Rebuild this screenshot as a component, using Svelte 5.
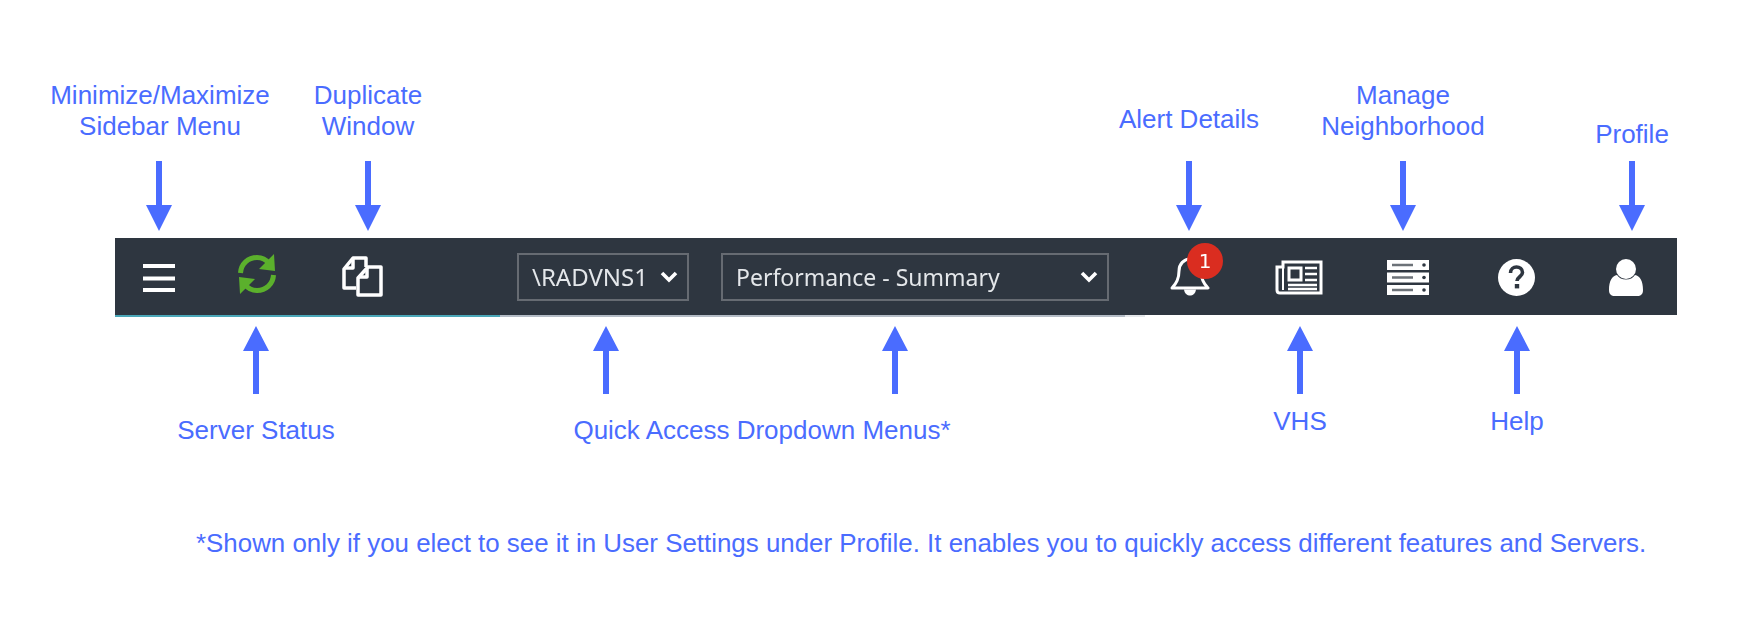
<script>
    // callouts around the toolbar: x is the centre, y the middle of the first line
    const labels = [
        { x: 160, y: 95, lines: ["Minimize/Maximize", "Sidebar Menu"] },
        { x: 368, y: 95, lines: ["Duplicate", "Window"] },
        { x: 1189, y: 119, lines: ["Alert Details"] },
        { x: 1403, y: 95, lines: ["Manage", "Neighborhood"] },
        { x: 1632, y: 134, lines: ["Profile"] },
        { x: 256, y: 430, lines: ["Server Status"] },
        { x: 762, y: 430, lines: ["Quick Access Dropdown Menus*"] },
        { x: 1300, y: 421, lines: ["VHS"] },
        { x: 1517, y: 421, lines: ["Help"] }
    ];
    const arrowsDown = [159, 368, 1189, 1403, 1632];
    const arrowsUp = [256, 606, 895, 1300, 1517];
</script>

<main class="canvas">
    <div class="bar">
        <div class="slot s1">
            <svg width="32" height="28" viewBox="0 0 32 28"><path d="M0 2h32M0 14.500h32M0 26h32" stroke="#fff" stroke-width="4"/></svg>
        </div>
        <div class="slot s2">
            <svg class="sync" width="40" height="42" viewBox="0 0 40 42">
                <g fill="none" stroke="#5bb02c" stroke-width="5">
                    <path d="M3.500 20C4 11 11 4.500 20 4.500c5 0 9 2 12 6"/>
                    <path d="M36.500 22c-.5 9-7.500 15.500-16.500 15.500-5 0-9-2-12-6"/>
                </g>
                <path fill="#5bb02c" d="M37 1l1 17-16-2zM3 41L2 24l16 2z"/>
            </svg>
        </div>
        <div class="slot s3">
            <svg width="42" height="42" viewBox="0 0 42 42" fill="none" stroke="#fff" stroke-width="3.500" stroke-linejoin="round">
                <path d="M15 33H3V14L12 3h13v9"/>
                <path d="M12 4v9H4"/>
                <path d="M17 23l10-11h13v28H17z"/>
                <path d="M26 13v9h-8"/>
            </svg>
        </div>

        <div class="dropdowns">
            <div class="dd small"><span>\RADVNS1</span><svg width="18" height="12" viewBox="0 0 18 12"><path d="M2 2l7 7 7-7" fill="none" stroke="#fff" stroke-width="3.600"/></svg></div>
            <div class="dd wide"><span>Performance - Summary</span><svg width="18" height="12" viewBox="0 0 18 12"><path d="M2 2l7 7 7-7" fill="none" stroke="#fff" stroke-width="3.600"/></svg></div>
        </div>

        <div class="right">
            <div class="slot r bell">
                <svg width="40" height="44" viewBox="0 0 40 44" fill="none" stroke="#fff" stroke-width="3" stroke-linejoin="round">
                    <path d="M2 34c5-5 7-10 7-17 0-7 5-12 11-12s11 5 11 12c0 7 2 12 7 17z"/>
                    <path d="M14 35.500c1 8 11 8 12 0z" fill="#fff" stroke="none"/>
                </svg>
                <span class="badge">1</span>
            </div>
            <div class="slot r">
                <svg width="48" height="35" viewBox="0 0 48 35">
                    <path d="M8 2h38v31H5c-2 0-3-1-3-3V7h6z" fill="none" stroke="#fff" stroke-width="3"/>
                    <path d="M8 3v27" stroke="#fff" stroke-width="2"/>
                    <path d="M14 8h12v12H14z" fill="none" stroke="#fff" stroke-width="3"/>
                    <path d="M30 8h12M30 14h12M30 20h12M13 25h29M13 29h29" stroke="#fff" stroke-width="2.400"/>
                </svg>
            </div>
            <div class="slot r">
                <svg width="42" height="35" viewBox="0 0 42 35">
                    <path d="M0 0h42v10H0zM0 12.500h42v10H0zM0 25h42v10H0z" fill="#fff"/>
                    <path d="M5 5h21M5 17.500h21M5 30h21" stroke="#6c7278" stroke-width="2.400"/>
                    <circle cx="37" cy="5" r="1.800" fill="#2e3640"/>
                    <circle cx="37" cy="17.500" r="1.800" fill="#2e3640"/>
                    <circle cx="37" cy="30" r="1.800" fill="#2e3640"/>
                </svg>
            </div>
            <div class="slot r">
                <svg width="37" height="37" viewBox="0 0 37 37">
                    <circle cx="18.500" cy="18.500" r="18.500" fill="#fff"/>
                    <path d="M12.500 14c0-4 3-6 6-6s6 2 6 5.500c0 4-5.500 4.500-5.500 8.500" fill="none" stroke="#2e3640" stroke-width="3.600"/>
                    <rect x="16.800" y="25" width="4.400" height="4.400" fill="#2e3640"/>
                </svg>
            </div>
            <div class="slot r last">
                <svg width="34" height="37" viewBox="0 0 34 37" fill="#fff">
                    <circle cx="17" cy="10" r="10"/>
                    <path d="M0 31c0-9 3-14 8-15 2 3 5 4.500 9 4.500s7-1.500 9-4.500c5 1 8 6 8 15 0 4-2 6-6 6H6c-4 0-6-2-6-6z"/>
                </svg>
            </div>
        </div>
    </div>

    {#each arrowsDown as x}
        <svg class="arrow" style="left: {x - 13}px; top: 161px" width="26" height="70" viewBox="0 0 26 70"><path d="M10 0h6v44h10L13 70 0 44h10z"/></svg>
    {/each}
    {#each arrowsUp as x}
        <svg class="arrow" style="left: {x - 13}px; top: 326px" width="26" height="68" viewBox="0 0 26 68"><path d="M10 68h6V25h10L13 0 0 25h10z"/></svg>
    {/each}

    {#each labels as l}
        <div class="label" style="left: {l.x}px; top: {l.y - 15.500}px">
            {#each l.lines as line}<div>{line}</div>{/each}
        </div>
    {/each}

    <p class="note">*Shown only if you elect to see it in User Settings under Profile. It enables you to quickly access different features and Servers.</p>
</main>

<style>
    :global(body) {
        margin: 0;
        background: #fff;
    }

    .canvas {
        position: relative;
        width: 1764px;
        height: 640px;
        padding-top: 238px;
        box-sizing: border-box;
        overflow: hidden;
        font-family: "Liberation Sans", Arial, sans-serif;
    }

    /* toolbar */
    .bar {
        display: flex;
        align-items: center;
        width: 1562px;
        height: 77px;
        margin-left: 115px;
        background: #2e3640;
        position: relative;
        filter: blur(0.4px);
    }
    /* teal and grey rules left over under the bar */
    .bar::before {
        content: "";
        position: absolute;
        left: 385px;
        top: 77px;
        width: 645px;
        height: 2px;
        background: linear-gradient(to right, #b4bcc6 625px, #e4e7ea 625px);
    }
    .bar::after {
        content: "";
        position: absolute;
        left: 0;
        top: 77px;
        width: 385px;
        height: 2px;
        background: #4aa7b8;
    }

    .slot {
        display: flex;
        justify-content: center;
        align-items: center;
        flex: none;
        position: relative;
    }
    .s1 { width: 88px; padding-top: 3px; }
    .s2 { width: 108px; padding-bottom: 5px; }
    .s3 { width: 102px; padding-bottom: 1px; }

    .dropdowns {
        display: flex;
        gap: 32px;
        margin-left: 104px;
    }
    .dd {
        display: flex;
        align-items: center;
        justify-content: space-between;
        height: 48px;
        box-sizing: border-box;
        padding: 0 9px 0 13px;
        border: 2px solid #666b72;
        color: #e4e7ea;
        font-family: "Noto Sans", sans-serif;
        font-size: 23px;
    }
    .small { width: 172px; font-size: 24px; }
    .wide { width: 388px; }

    .right {
        display: flex;
        flex: 1;
        margin-left: 26px;
        padding-top: 2px;
    }
    .r { width: 109px; }
    .last {
        width: 106px;
        box-sizing: border-box;
        justify-content: flex-end;
        padding-right: 34px;
    }
    .bell svg { margin-bottom: 3px; }

    .badge {
        position: absolute;
        left: 52px;
        top: -11px;
        width: 36px;
        height: 36px;
        border-radius: 50%;
        background: #da2d20;
        color: #fff;
        font-family: "DejaVu Sans", sans-serif;
        font-size: 20px;
        line-height: 36px;
        text-align: center;
    }

    /* annotations */
    .arrow {
        position: absolute;
        fill: #4a6cff;
    }
    .label {
        position: absolute;
        transform: translateX(-50%);
        color: #4a6cff;
        font-size: 26px;
        line-height: 31px;
        text-align: center;
        white-space: nowrap;
    }
    .note {
        position: absolute;
        left: 196px;
        top: 528px;
        margin: 0;
        color: #4a6cff;
        font-size: 25.900px;
        line-height: 31px;
        white-space: nowrap;
    }
</style>
